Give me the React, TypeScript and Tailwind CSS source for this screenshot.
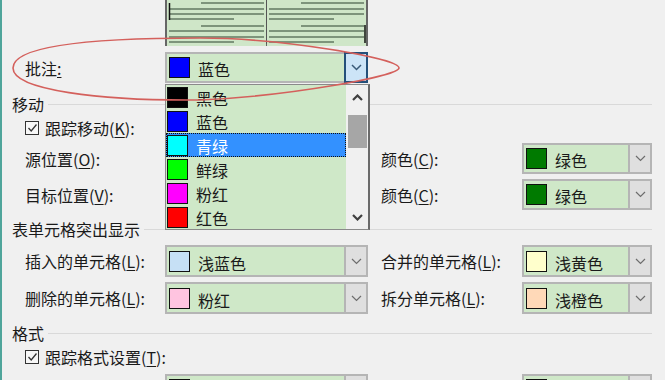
import * as React from "react";

const FONT = "font-['Noto_Sans_CJK_SC','Microsoft_YaHei',sans-serif]";

function Chevron({color = "#6d6d6d", sw = 1.2}: {color?: string; sw?: number}) {
    return (
        <svg width="11" height="7" viewBox="0 0 11 7">
            <polyline points="1,1 5.5,5.5 10,1" fill="none" stroke={color} strokeWidth={sw}/>
        </svg>
    );
}

function Key({k}: {k: string}) {
    return (
        <span>
            (<span className="underline underline-offset-2">{k}</span>):
        </span>
    );
}

function Combo({
                   swatch,
                   text,
                   width,
                   focused = false,
               }: {
    swatch?: string;
    text?: string;
    width: string;
    focused?: boolean;
}) {
    return (
        <div className={`flex h-full shrink-0 border-2 border-[#b5b5b5] bg-[#cfe8c8] ${width}`}>
            <div className="flex flex-1 items-center">
                {swatch && (
                    <div className="ml-[2px] h-[21px] w-[21px] border border-[#111]" style={{background: swatch}}/>
                )}
                {text && <span className="ml-[8px] mt-[3px] text-[16px] leading-none">{text}</span>}
            </div>
            {focused ? (
                <div className="-my-[2px] -mr-[2px] flex w-[24px] items-center justify-center border-2 border-[#24507a] bg-[#cce4f7]">
                    <Chevron color="#3a5a78" sw={1.5}/>
                </div>
            ) : (
                <div className="flex w-[22px] items-center justify-center border-l-2 border-[#b5b5b5] bg-[#dfdfdf]">
                    <Chevron/>
                </div>
            )}
        </div>
    );
}

function Header({title, className}: {title: string; className: string}) {
    return (
        <div className={`flex h-[16px] shrink-0 items-center ${className}`}>
            <span className="text-[16px] leading-none">{title}</span>
            <div className="ml-[4px] h-px flex-1 bg-[#d9d9d9]"/>
        </div>
    );
}

function Check({label, k, className}: {label: string; k: string; className: string}) {
    return (
        <div className={`flex h-[16px] shrink-0 items-center pl-[13px] ${className}`}>
            <div className="flex h-[14px] w-[14px] items-center justify-center border border-[#333] bg-[#f7f7f7]">
                <svg width="11" height="10" viewBox="0 0 11 10">
                    <polyline points="1.5,5 4.2,8 9.5,1.5" fill="none" stroke="#333" strokeWidth="1.3"/>
                </svg>
            </div>
            <span className="ml-[6px] text-[16px] leading-none">
                {label}
                <Key k={k}/>
            </span>
        </div>
    );
}

function Label({text, k, className}: {text: string; k: string; className: string}) {
    return (
        <div className={`flex shrink-0 items-center text-[16px] leading-none ${className}`}>
            {text}
            <Key k={k}/>
        </div>
    );
}

function PreviewPanel({cursorRight}: {cursorRight?: boolean}) {
    const full = [9, 14, 31, 37];
    return (
        <svg width="100" height="46" className="block">
            <rect width="100" height="46" fill="#cfe6c8"/>
            {[3, 26].map((y) => (
                <line key={y} x1="34" x2="97" y1={y} y2={y} stroke="#7d947b" strokeWidth="2"/>
            ))}
            {full.map((y) => (
                <line key={y} x1="2" x2="97" y1={y} y2={y} stroke="#7d947b" strokeWidth="2"/>
            ))}
            {[19, 42].map((y) => (
                <line key={y} x1="2" x2="67" y1={y} y2={y} stroke="#7d947b" strokeWidth="2"/>
            ))}
            {cursorRight ? (
                <line x1="98" x2="98" y1="25" y2="43" stroke="#111" strokeWidth="1.5"/>
            ) : (
                <line x1="2.5" x2="2.5" y1="3" y2="20" stroke="#111" strokeWidth="1.5"/>
            )}
        </svg>
    );
}

const ITEMS = [
    {c: "#000000", t: "黑色"},
    {c: "#0000ff", t: "蓝色"},
    {c: "#00ffff", t: "青绿", sel: true},
    {c: "#00ff00", t: "鲜绿"},
    {c: "#ff00ff", t: "粉红"},
    {c: "#ff0000", t: "红色"},
];

function ColorList() {
    return (
        <div className="absolute left-[165px] top-[84px] flex h-[146px] w-[205px] border border-[#8a8a8a] border-r-[#6a6a6a] border-r-2 bg-[#cfe8c8]">
            <div className="flex flex-1 flex-col overflow-hidden">
                {ITEMS.map((it) => (
                    <div
                        key={it.t}
                        className={`flex h-[24px] shrink-0 items-center ${it.sel ? "bg-[#3391ff] text-white outline-1 outline-dotted -outline-offset-1 outline-[#111]" : ""}`}
                    >
                        <div className="ml-[1px] h-[21px] w-[21px] border border-[#111]" style={{background: it.c}}/>
                        <span className="ml-[8px] mt-[2px] text-[16px] leading-none">{it.t}</span>
                    </div>
                ))}
            </div>
            <div className="flex w-[22px] flex-col items-center bg-[#f0f0f0]">
                <div className="mt-[9px] rotate-180">
                    <Chevron color="#404040" sw={2.2}/>
                </div>
                <div className="mt-[14px] h-[33px] w-[19px] bg-[#a6a6a6]"/>
                <div className="mt-auto mb-[8px]">
                    <Chevron color="#404040" sw={2.2}/>
                </div>
            </div>
        </div>
    );
}

export default function App() {
    return (
        <div className={`relative flex h-[380px] w-[665px] overflow-hidden bg-[#f0f0f0] text-[#1a1a1a] ${FONT}`}>
            <div className="w-[2px] shrink-0 bg-[#4fa59b]"/>

            <div className="flex flex-1 flex-col pl-[10px] pr-[10px]">
                {/* preview */}
                <div className="ml-[153px] flex h-[46px] w-[203px] shrink-0 border-x-2 border-b-2 border-[#666]">
                    <PreviewPanel/>
                    <div className="w-[2px] bg-[#555]"/>
                    <PreviewPanel cursorRight/>
                </div>

                <div className="mt-[6px] flex h-[31px] shrink-0">
                    <div className="flex w-[153px] items-center pl-[13px] text-[16px] leading-none">
                        批注<span className="underline underline-offset-2">:</span>
                    </div>
                    <Combo swatch="#0000ff" text="蓝色" width="w-[203px]" focused/>
                </div>

                <Header title="移动" className="mt-[13px]"/>
                <Check label="跟踪移动" k="K" className="mt-[8px]"/>

                <div className="mt-[7px] flex h-[31px] shrink-0">
                    <Label text="源位置" k="O" className="w-[153px] pl-[13px]"/>
                    <div className="w-[203px] shrink-0"/>
                    <Label text="颜色" k="C" className="ml-[13px] w-[141px]"/>
                    <Combo swatch="#007a00" text="绿色" width="w-[130px]"/>
                </div>
                <div className="mt-[5px] flex h-[31px] shrink-0">
                    <Label text="目标位置" k="V" className="w-[153px] pl-[13px]"/>
                    <div className="w-[203px] shrink-0"/>
                    <Label text="颜色" k="C" className="ml-[13px] w-[141px]"/>
                    <Combo swatch="#007a00" text="绿色" width="w-[130px]"/>
                </div>

                <Header title="表单元格突出显示" className="mt-[11px]"/>

                <div className="mt-[8px] flex h-[32px] shrink-0">
                    <Label text="插入的单元格" k="L" className="w-[153px] pl-[13px]"/>
                    <Combo swatch="#c6e0f5" text="浅蓝色" width="w-[203px]"/>
                    <Label text="合并的单元格" k="L" className="ml-[13px] w-[141px]"/>
                    <Combo swatch="#ffffcc" text="浅黄色" width="w-[130px]"/>
                </div>
                <div className="mt-[5px] flex h-[32px] shrink-0">
                    <Label text="删除的单元格" k="L" className="w-[153px] pl-[13px]"/>
                    <Combo swatch="#ffc4e0" text="粉红" width="w-[203px]"/>
                    <Label text="拆分单元格" k="L" className="ml-[13px] w-[141px]"/>
                    <Combo swatch="#ffd9b8" text="浅橙色" width="w-[130px]"/>
                </div>

                <Header title="格式" className="mt-[11px]"/>
                <Check label="跟踪格式设置" k="T" className="mt-[8px]"/>

                <div className="mt-[9px] flex h-[31px] shrink-0">
                    <div className="w-[153px] shrink-0"/>
                    <Combo swatch="#3f8f6a" width="w-[203px]"/>
                    <div className="ml-[13px] w-[141px] shrink-0"/>
                    <Combo swatch="#5a1a0a" width="w-[130px]"/>
                </div>
            </div>

            <div className="w-[10px] shrink-0"/>
            <div className="w-[2px] shrink-0 bg-[#5aa9a0]"/>
            <div className="w-[1px] shrink-0 bg-[#d6e8e2]"/>

            <ColorList/>

            <svg className="pointer-events-none absolute inset-0" width="665" height="380">
                <path
                    d="M13,68 C13,46 90,38 200,38 C280,38 399,58 399,68 C399,76 290,96 200,100 C100,101 13,90 13,68 Z"
                    fill="none"
                    stroke="#d4605c"
                    strokeWidth="1.6"
                />
            </svg>
        </div>
    );
}
